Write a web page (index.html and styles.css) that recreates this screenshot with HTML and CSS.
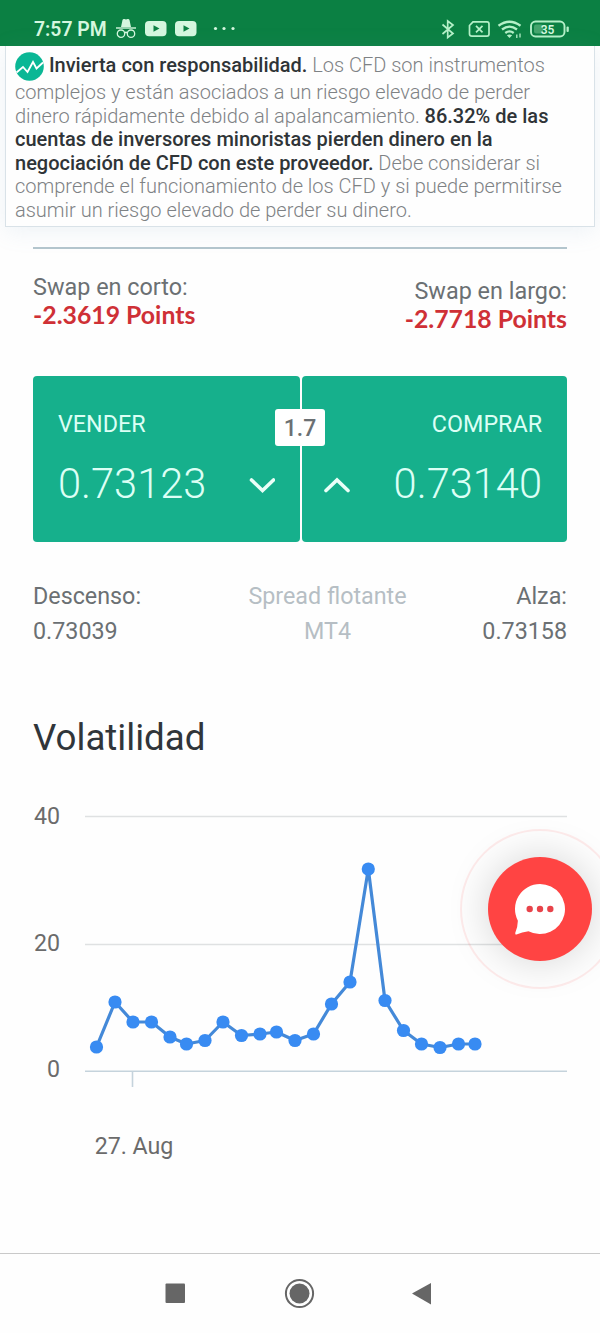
FILE: index.html
```html
<!DOCTYPE html>
<html lang="es">

<head>
    <meta charset="utf-8">
    <title>Volatilidad</title>
    <link rel="stylesheet" href="styles.css">
</head>

<body>
    <div class="status-bar">
        <span class="clock">7:57 PM</span>
        <svg class="status-icons" width="122" height="24" viewBox="0 0 122 24">
            <!-- incognito -->
            <path d="M5 10 L6.500 3 Q7 1.500 8.500 2 L10 2.600 L11.500 2 Q13 1.500 13.500 3 L15 10 Z" fill="#d5f7df" />
            <path d="M0 11 H20" stroke="#d5f7df" stroke-width="1.400" />
            <g fill="none" stroke="#d5f7df" stroke-width="1.300">
                <circle cx="5" cy="16.700" r="3.700" />
                <circle cx="15" cy="16.700" r="3.700" />
                <path d="M8.500 16 Q10 14.500 11.500 16" />
            </g>
            <!-- video notifications -->
            <rect x="29" y="4" width="21.500" height="15.300" rx="4" fill="#d5f7df" />
            <path d="M37.500 8.200 L43.500 11.500 L37.500 14.800 Z" fill="#0b8043" />
            <rect x="59" y="4" width="21.500" height="15.300" rx="4" fill="#d5f7df" />
            <path d="M67.500 8.200 L73.500 11.500 L67.500 14.800 Z" fill="#0b8043" />
            <g fill="#d5f7df">
                <circle cx="99.500" cy="11.500" r="1.600" />
                <circle cx="108" cy="11.500" r="1.600" />
                <circle cx="117" cy="11.500" r="1.600" />
            </g>
        </svg>
        <svg class="system-icons" width="130" height="24" viewBox="0 0 130 24">
            <g fill="none" stroke="#b5f0c8" stroke-width="1.700">
                <path d="M2.500 7.500 L13 16.500 L7.700 20.500 V4 L13 8 L2.500 17" />
                <path d="M33 4.800 H47 Q49 4.800 49 7 V17 Q49 19.200 47 19.200 H32 Q29.500 19.200 29.500 17 V8.500 Z" />
                <path d="M36 8.800 L42.500 15.300 M42.500 8.800 L36 15.300" />
                <path d="M58.500 8.700 Q69.500 0.700 80.500 8.700" stroke-width="2.300" />
                <path d="M62 12.500 Q69.500 6.700 77 12.500" stroke-width="2.300" />
                <path d="M65.300 16 Q69.500 12.700 73.700 16" stroke-width="2.300" />
                <path d="M76.800 21 V17.500 M80 16.500 V20.500" stroke-width="1.300" />
                <rect x="91" y="4.500" width="33.500" height="15" rx="4.500" stroke-width="1.900" />
            </g>
            <path d="M66.800 18.300 Q69.500 16.500 72.200 18.300 L69.500 21 Z" fill="#b5f0c8" />
            <rect x="94" y="7.500" width="9" height="9" rx="2" fill="#46a56d" />
            <rect x="126.500" y="9.500" width="2.300" height="5.500" rx="1" fill="#b5f0c8" />
            <text class="battery-text" x="107.500" y="16.500">35</text>
        </svg>
    </div>

    <div class="disclaimer">
        <svg class="logo" width="29" height="29" viewBox="0 0 29 29">
            <circle cx="14.500" cy="14.500" r="14.300" fill="#0ab795" />
            <path d="M1.500 20.500 L8 15 L12.500 20 L18 10 L21.500 16.500 L28 10.500" fill="none" stroke="#fff" stroke-width="1.800" />
        </svg>
        <b>Invierta con responsabilidad.</b> Los CFD son instrumentos<br>
        complejos y están asociados a un riesgo elevado de perder<br>
        dinero rápidamente debido al apalancamiento. <b>86.32% de las<br>
        cuentas de inversores minoristas pierden dinero en la<br>
        negociación de CFD con este proveedor.</b> Debe considerar si<br>
        comprende el funcionamiento de los CFD y si puede permitirse<br>
        asumir un riesgo elevado de perder su dinero.
    </div>

    <div class="content">
        <div class="swaps">
            <div class="swap">
                <div>Swap en corto:</div>
                <div class="points">-2.3619 Points</div>
            </div>
            <div class="swap swap-long">
                <div>Swap en largo:</div>
                <div class="points">-2.7718 Points</div>
            </div>
        </div>

        <div class="trade">
            <div class="trade-box">
                <div class="trade-label">VENDER</div>
                <div class="trade-row">
                    <span class="price">0.73123</span>
                    <svg width="26" height="20" viewBox="0 0 26 20">
                        <path d="M2.500 7 L13.500 17.500 L24.500 7" fill="none" stroke="#eafff8" stroke-width="3.600" stroke-linecap="round" />
                    </svg>
                </div>
            </div>
            <div class="trade-box trade-buy">
                <div class="trade-label">COMPRAR</div>
                <div class="trade-row">
                    <svg class="up" width="26" height="20" viewBox="0 0 26 20">
                        <path d="M2 17.500 L13 7 L24 17.500" fill="none" stroke="#eafff8" stroke-width="3.600" stroke-linecap="round" />
                    </svg>
                    <span class="price">0.73140</span>
                </div>
            </div>
            <span class="spread">1.7</span>
        </div>

        <div class="range">
            <div>Descenso:<br>0.73039</div>
            <div class="range-center">Spread flotante<br>MT4</div>
            <div class="range-right">Alza:<br>0.73158</div>
        </div>

        <h2>Volatilidad</h2>

        <svg class="chart" width="534" height="380" viewBox="33 790 534 380">
            <g stroke="#dfe1e2" stroke-width="1.500">
                <path d="M85 816.500 H567" />
                <path d="M85 944.500 H567" />
            </g>
            <path d="M85 1071.300 H567 M132.500 1071.300 V1087" fill="none" stroke="#c5d3dc" stroke-width="1.600" />
            <g class="chart-labels">
                <text x="60" y="824" text-anchor="end">40</text>
                <text x="60" y="951" text-anchor="end">20</text>
                <text x="60" y="1077" text-anchor="end">0</text>
                <text x="134" y="1154" text-anchor="middle">27. Aug</text>
            </g>
            <polyline id="line" fill="none" stroke="#4489d8" stroke-width="3.200" stroke-linejoin="round" />
            <g id="dots" fill="#388bf2"></g>
        </svg>
    </div>

    <div class="nav-bar">
        <svg width="600" height="78" viewBox="0 0 600 78">
            <rect x="165.500" y="29.500" width="19.500" height="19.500" rx="1" fill="#666" />
            <circle cx="299.500" cy="39.500" r="13.600" fill="none" stroke="#666" stroke-width="2" />
            <circle cx="299.500" cy="39.500" r="10" fill="#666" />
            <path d="M412 39.500 L431 29 V50.500 Z" fill="#666" />
        </svg>
    </div>

    <div class="chat">
        <div class="chat-button">
            <svg width="52" height="54" viewBox="0 0 52 54">
                <path d="M26 2 A25 25 0 1 1 14.500 49.200 Q8 50 2.500 52.600 Q1 52.700 1.300 50.800 Q4 44 3.800 38.500 A25 25 0 0 1 26 2 Z" fill="#fff" />
                <g fill="#e8434a">
                    <circle cx="15.700" cy="27" r="3.200" />
                    <circle cx="26" cy="27" r="3.200" />
                    <circle cx="36.300" cy="27" r="3.200" />
                </g>
            </svg>
        </div>
    </div>

    <script>
        const points = [
            [96.5, 1047], [115, 1002], [133, 1022], [151.5, 1022], [170, 1037], [186.5, 1044],
            [205, 1040.5], [223, 1022], [241.5, 1035.5], [260, 1034], [276.5, 1032], [295, 1040.5],
            [313.5, 1034], [331.5, 1004], [350, 982], [368.3, 869], [385, 1000.5], [403.5, 1030.5],
            [421.5, 1044], [440, 1047.5], [458.5, 1044], [475, 1044]
        ];
        document.getElementById('line').setAttribute('points', points.join(' '));
        points.forEach((point) => {
            const dot = document.createElementNS('http://www.w3.org/2000/svg', 'circle');
            dot.setAttribute('cx', point[0]);
            dot.setAttribute('cy', point[1]);
            dot.setAttribute('r', 6.6);
            document.getElementById('dots').appendChild(dot);
        });
    </script>
</body>

</html>
```

FILE: styles.css
```css
* {
    margin: 0;
    padding: 0;
    box-sizing: border-box;
}

body {
    display: flex;
    flex-direction: column;
    height: 1333px;
    position: relative;
    overflow: hidden;
    background-color: #fefefe;
    color: #6b7073;
    font-family: Roboto, sans-serif;
}

svg {
    display: block;
    flex-shrink: 0;
}

.status-bar {
    display: flex;
    align-items: flex-start;
    height: 46px;
    padding: 17px 30px 0 34px;
    background-color: #0b8043;
}

.clock {
    width: 82px;
    color: #d5f7df;
    font-size: 19.4px;
    font-weight: 600;
    line-height: 25px;
    white-space: nowrap;
}

.system-icons {
    margin-left: auto;
}

.battery-text {
    font-size: 12px;
    font-weight: 600;
    fill: #d5f7df;
    text-anchor: middle;
}

.disclaimer {
    height: 181px;
    margin: 0 5px;
    padding: 6px 9px 0;
    border: 1px solid #d9e2e8;
    border-top: none;
    background-color: #fefefe;
    box-shadow: 0 4px 22px rgba(120, 160, 190, 0.13);
    color: #7e8285;
    font-size: 20px;
    font-weight: 300;
    line-height: 23.5px;
    white-space: nowrap;
}

.disclaimer b {
    color: #2f3437;
    font-weight: 500;
}

.logo {
    display: inline-block;
    vertical-align: -9px;
}

.content {
    flex: 1;
    margin: 20px 33px 0;
    border-top: 2px solid #b3c5cd;
}

.swaps {
    display: flex;
    justify-content: space-between;
    height: 127px;
    padding-top: 24px;
    font-size: 23.4px;
    line-height: 28px;
}

.swap-long {
    padding-top: 4px;
    text-align: right;
}

.points {
    color: #cf3036;
    font-family: Lato, sans-serif;
    font-size: 24.8px;
    font-weight: 700;
    line-height: 27px;
}

.trade {
    display: flex;
    gap: 2px;
    position: relative;
    height: 166px;
}

.trade-box {
    width: 267px;
    padding: 32px 25px 0;
    border-radius: 4px;
    background-color: #16b08c;
    color: #dcfff5;
}

.trade-buy {
    width: 265px;
    text-align: right;
}

.trade-label {
    font-size: 23.3px;
    line-height: 33px;
}

.trade-row {
    display: flex;
    align-items: center;
    justify-content: space-between;
    height: 56px;
    margin-top: 14px;
}

.up {
    margin-left: -3px;
}

.price {
    font-size: 41.6px;
    font-weight: 300;
}

.spread {
    position: absolute;
    top: 33px;
    left: 242px;
    width: 50px;
    height: 37px;
    border-radius: 3px;
    background-color: #fff;
    color: #6b7073;
    font-size: 23px;
    font-weight: 500;
    line-height: 40px;
    text-align: center;
}

.range {
    display: grid;
    grid-template-columns: 190px 209px 135px;
    margin-top: 37px;
    font-size: 23.3px;
    line-height: 35px;
}

.range-center {
    color: #b6bec4;
    text-align: center;
}

.range-right {
    text-align: right;
}

h2 {
    margin-top: 65px;
    color: #30353a;
    font-size: 36.7px;
    font-weight: 400;
    line-height: 48px;
}

.chart {
    margin-top: 28px;
}

.chart-labels {
    fill: #6b6b6b;
    font-size: 23.2px;
}

.nav-bar {
    height: 80px;
    border-top: 1px solid #c9c9c9;
}

.chat {
    display: flex;
    align-items: center;
    justify-content: center;
    position: absolute;
    top: 829px;
    left: 460px;
    width: 160px;
    height: 160px;
    border: 2px solid rgba(255, 70, 70, 0.1);
    border-radius: 50%;
}

.chat-button {
    display: flex;
    align-items: center;
    justify-content: center;
    width: 104px;
    height: 104px;
    border-radius: 50%;
    background-color: #ff4443;
    box-shadow: 0 0 42px rgba(0, 0, 0, 0.17);
}
```
